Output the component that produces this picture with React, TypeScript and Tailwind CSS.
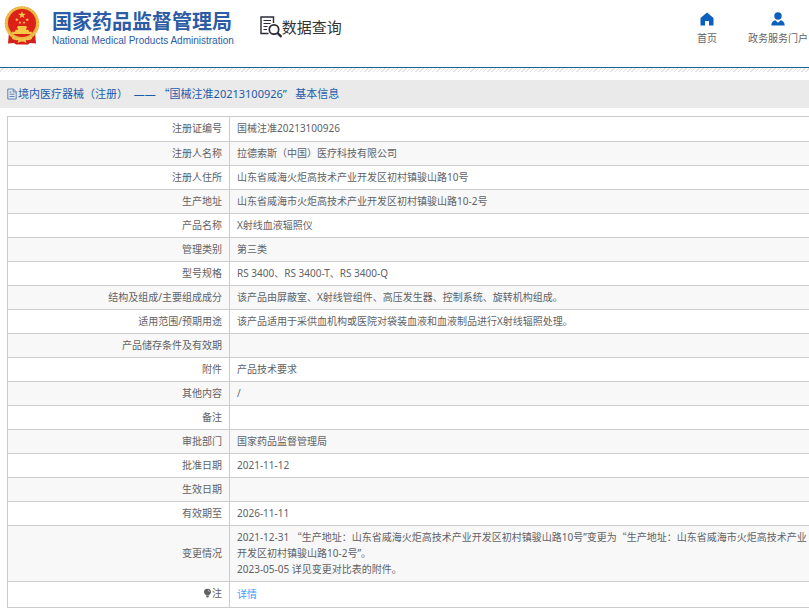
import { Fragment, type ReactNode } from "react";

type Row = { label: ReactNode; lines: string[]; href?: string };

const rows: Row[] = [
  { label: "注册证编号", lines: ["国械注准20213100926"] },
  { label: "注册人名称", lines: ["拉德索斯（中国）医疗科技有限公司"] },
  { label: "注册人住所", lines: ["山东省威海火炬高技术产业开发区初村镇骏山路10号"] },
  { label: "生产地址", lines: ["山东省威海市火炬高技术产业开发区初村镇骏山路10-2号"] },
  { label: "产品名称", lines: ["X射线血液辐照仪"] },
  { label: "管理类别", lines: ["第三类"] },
  { label: "型号规格", lines: ["RS 3400、RS 3400-T、RS 3400-Q"] },
  {
    label: "结构及组成/主要组成成分",
    lines: ["该产品由屏蔽室、X射线管组件、高压发生器、控制系统、旋转机构组成。"],
  },
  {
    label: "适用范围/预期用途",
    lines: ["该产品适用于采供血机构或医院对袋装血液和血液制品进行X射线辐照处理。"],
  },
  { label: "产品储存条件及有效期", lines: [] },
  { label: "附件", lines: ["产品技术要求"] },
  { label: "其他内容", lines: ["/"] },
  { label: "备注", lines: [] },
  { label: "审批部门", lines: ["国家药品监督管理局"] },
  { label: "批准日期", lines: ["2021-11-12"] },
  { label: "生效日期", lines: [] },
  { label: "有效期至", lines: ["2026-11-11"] },
  {
    label: "变更情况",
    lines: [
      "2021-12-31 “生产地址：山东省威海火炬高技术产业开发区初村镇骏山路10号”变更为“生产地址：山东省威海市火炬高技术产业",
      "开发区初村镇骏山路10-2号”。",
      "2023-05-05 详见变更对比表的附件。",
    ],
  },
  {
    label: (
      <span className="inline-flex items-center">
        <BulbIcon />注
      </span>
    ),
    lines: ["详情"],
    href: "#detail",
  },
];

/* Opening quotes take the full-width Chinese form. */
function Zh({ text }: { text: string }) {
  return (
    <>
      {text.split(/(“)/).map((part, i) =>
        part === "“" ? (
          <span key={i} className="font-['Noto_Sans_CJK_SC',sans-serif]">
            {part}
          </span>
        ) : (
          <Fragment key={i}>{part}</Fragment>
        ),
      )}
    </>
  );
}

function BulbIcon() {
  return (
    <svg viewBox="0 0 9 10" className="h-[10px] w-[9px]" aria-hidden="true">
      <path d="M4.5 .8a3.4 3.4 0 0 0-3.5 3.300c0 1.400 1.200 2.200 1.900 3.200h3.200c.7-1 1.900-1.800 1.900-3.200A3.400 3.400 0 0 0 4.500.8Z" fill="#606266" />
      <path d="M3.200 7.600h2.600v1L5.200 9.500H3.800l-.6-.9Z" fill="#606266" />
      <path d="M5 2.300c.8.1 1.400.7 1.500 1.500" stroke="#fff" strokeWidth=".6" fill="none" />
    </svg>
  );
}

function Emblem() {
  return (
    <svg viewBox="0 0 36 40" className="h-10 w-9 shrink-0" aria-hidden="true">
      <path d="M5 26 4 37.500l6-.5 2 1.500h12l2-1.500 6 .5L31 26Z" fill="#d3201c" />
      <circle cx="18" cy="17.500" r="17.300" fill="#e8b43c" />
      <circle cx="18" cy="17.500" r="16" fill="none" stroke="#f0c962" strokeWidth="1.400" strokeDasharray="1.600 1.400" />
      <circle cx="18" cy="17" r="14" fill="#dc2119" />
      <path d="m18 5 .95 2.700h2.900l-2.300 1.700.85 2.800-2.400-1.700-2.400 1.700.85-2.800-2.300-1.700h2.900Z" fill="#f8c84c" />
      <path d="m12.800 12 .5 1.100 1.200.1-.9.8.3 1.200-1.100-.6-1 .6.2-1.200-.9-.8 1.200-.1ZM23.200 12l.5 1.100 1.200.1-.9.8.3 1.200-1.100-.6-1 .6.2-1.200-.9-.8 1.200-.1ZM16 15l.4.9 1 .1-.7.7.2 1-.9-.5-.9.5.2-1-.7-.7 1-.1ZM20 15l.4.9 1 .1-.7.7.2 1-.9-.5-.9.5.2-1-.7-.7 1-.1Z" fill="#f8c84c" />
      <path d="M13 21.200 14 20h8l1 1.200v1.100h-1v1.500h2.200l.8 1.200v.8h2.800v2.200H8.200v-2.200H11V25l.8-1.200H14v-1.500h-1Z" fill="#f6c845" />
      <path d="M7.500 30.500c3.500 3 6.500 2.300 8 1.300l2.500 1.700 2.500-1.700c1.500 1 4.500 1.700 8-1.300l-.8 2.500c-2.700 1.500-4.700 1.300-6.200.8l1 3.200c-1.500-.6-2.500-1.500-4.500-1.500s-3 .9-4.500 1.500l1-3.200c-1.500.5-3.500.7-6.200-.8Z" fill="#f1c548" />
    </svg>
  );
}

function SearchDocIcon() {
  return (
    <svg viewBox="0 0 22 22" className="h-[22px] w-[22px]" fill="none" stroke="#2b2b38" aria-hidden="true">
      <path d="M8.500 17.500H1V1h12.500v6" strokeWidth="1.400" />
      <path d="M3.500 4.500h7.500M3.500 7.500h7M3.500 10.500h4M3.500 13.500h3.500" strokeWidth="1.200" />
      <circle cx="14" cy="13.500" r="4.700" strokeWidth="1.700" />
      <path d="m17.500 17 4 4" strokeWidth="2.400" />
    </svg>
  );
}

function HomeIcon() {
  return (
    <svg viewBox="0 0 14 14" className="h-[14px] w-[14px]" aria-hidden="true">
      <path d="M7 .5.500 6v7.500H5V9h4v4.500h4.500V6Z" fill="#0b5fbd" />
    </svg>
  );
}

function UserIcon() {
  return (
    <svg viewBox="0 0 14 14" className="h-[14px] w-[14px]" fill="#0b5fbd" aria-hidden="true">
      <circle cx="7" cy="4" r="3.700" />
      <path d="M.3 13.500c0-3 1.700-5 4-5.300L7 10.700l2.700-2.500c2.300.3 4 2.300 4 5.300Z" />
    </svg>
  );
}

function DocIcon() {
  return (
    <svg viewBox="0 0 10 12" className="h-3 w-[10px]" fill="none" stroke="#4a78b8" strokeWidth=".9" aria-hidden="true">
      <path d="M.8 1h5.700l2.700 2.700V11H.8ZM6.200 1v3h3M2.500 4h2M2.500 6.200h5M2.500 8.500h5" />
    </svg>
  );
}

export default function App() {
  return (
    <div className="overflow-x-clip bg-white font-['Noto_Sans','Noto_Sans_CJK_SC',sans-serif] text-[10px] text-[#606266]" lang="zh-CN">
      <header className="flex h-[68px] items-start justify-between border-b border-[#1d6390] pl-1 whitespace-nowrap">
        <div className="flex items-start">
          <a href="#top" className="flex gap-3 pt-[6px] text-[#2d5ca6]">
            <Emblem />
            <span className="flex flex-col pt-[6px]">
              <span className="text-[20px] leading-5 font-bold">国家药品监督管理局</span>
              <span className="pt-[3px] font-['Liberation_Sans',sans-serif] text-[10px] leading-3">
                National Medical Products Administration
              </span>
            </span>
          </a>
          <a href="#search" className="ml-[26px] flex items-center pt-4 text-[15px] leading-[22px] text-[#333]">
            <SearchDocIcon />
            数据查询
          </a>
        </div>
        <nav className="flex gap-[31px] pt-3 pr-px">
          <a href="#home" className="flex flex-col items-center gap-1 leading-4">
            <HomeIcon />
            首页
          </a>
          <a href="#portal" className="flex flex-col items-center gap-1 leading-4">
            <UserIcon />
            政务服务门户
          </a>
        </nav>
      </header>
      <div className="h-1 bg-[repeating-linear-gradient(135deg,#fff_0px,#fff_2px,#e3e3e3_2px,#e3e3e3_3px)]" />

      <main className="pt-2">
        <h1 className="flex h-7 items-center gap-[1px] bg-[#eaeaea] pl-[7px] text-[11px] text-[#1c5cab]">
          <DocIcon />
          <span className="whitespace-pre">
            <Zh text="境内医疗器械（注册）  —— “国械注准20213100926”   基本信息" />
          </span>
        </h1>
        <div className="pt-2 pl-[7px]">
          <table className="w-full table-fixed border-collapse border-y border-l border-[#ccc] leading-4">
            <colgroup>
              <col className="w-[222px]" />
              <col />
            </colgroup>
            <tbody>
              {rows.map((row, i) => (
                <tr
                  key={i}
                  className={`border-b border-[#ccc] first:h-[25px] last:h-[26px] even:bg-[#f8f8f8] ${row.lines.length > 1 ? "h-14" : "h-6"}`}
                >
                  <th scope="row" className="border-r border-[#ccc] pt-[2px] pr-[7px] pb-1 text-right font-normal">
                    {row.label}
                  </th>
                  <td className="pt-[2px] pb-1 pl-[7px] whitespace-nowrap">
                    {row.lines.map((line) =>
                      row.href ? (
                        <a key={line} href={row.href} className="text-[#409eff]">
                          {line}
                        </a>
                      ) : (
                        <p key={line}>
                          <Zh text={line} />
                        </p>
                      ),
                    )}
                  </td>
                </tr>
              ))}
            </tbody>
          </table>
        </div>
      </main>
    </div>
  );
}
